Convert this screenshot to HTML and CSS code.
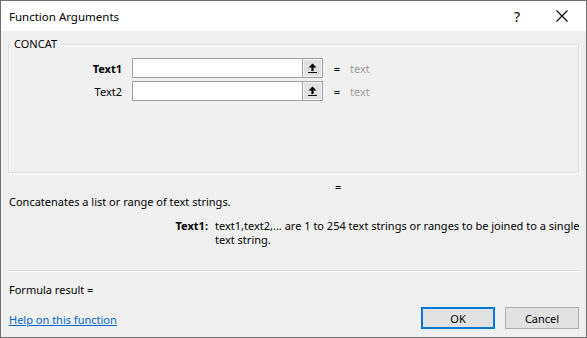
FILE: index.html
```html
<!DOCTYPE html>
<html lang="en">
<head>
  <meta charset="UTF-8" />
  <title>Function Arguments</title>
  <link rel="stylesheet" href="styles.css">
</head>
<body>
  <div class="dialog">
    <div class="titlebar">
      <span class="title">Function Arguments</span>
      <span class="help-btn">?</span>
      <span class="close-btn">
        <svg width="12" height="12" viewBox="0 0 12 12"><path d="M0.5 0.5 L11.5 11.5 M11.5 0.5 L0.5 11.5" stroke="#000" stroke-width="1.1" fill="none"/></svg>
      </span>
    </div>

    <div class="content">
      <fieldset class="group">
        <legend>CONCAT</legend>
        <div class="args">
          <label class="arg-name bold">Text1</label>
          <div class="ref-input">
            <input type="text" />
            <button class="ref-btn">
              <svg width="9" height="10" viewBox="0 0 9 10"><path d="M4.5 0.5 L8.5 4.5 L5.6 4.5 L5.6 8 L3.4 8 L3.4 4.5 L0.5 4.5 Z" fill="#000"/><rect x="0" y="9" width="9" height="1" fill="#000"/></svg>
            </button>
          </div>
          <span class="eq">=</span>
          <span class="val">text</span>

          <label class="arg-name">Text2</label>
          <div class="ref-input">
            <input type="text" />
            <button class="ref-btn">
              <svg width="9" height="10" viewBox="0 0 9 10"><path d="M4.5 0.5 L8.5 4.5 L5.6 4.5 L5.6 8 L3.4 8 L3.4 4.5 L0.5 4.5 Z" fill="#000"/><rect x="0" y="9" width="9" height="1" fill="#000"/></svg>
            </button>
          </div>
          <span class="eq">=</span>
          <span class="val">text</span>
        </div>
      </fieldset>

      <div class="result-eq">=</div>
      <div class="desc">Concatenates a list or range of text strings.</div>
      <div class="arg-help">
        <span class="bold help-name">Text1:</span>
        <span class="help-text">text1,text2,... are 1 to 254 text strings or ranges to be joined to a single text string.</span>
      </div>

      <div class="separator"></div>
      <div class="formula">Formula result =</div>

      <div class="footer">
        <a href="#" class="help-link">Help on this function</a>
        <div class="actions">
          <button class="btn primary">OK</button>
          <button class="btn">Cancel</button>
        </div>
      </div>
    </div>
  </div>
</body>
</html>
```

FILE: styles.css
```css
* {
  box-sizing: border-box;
}

body {
  margin: 0;
  padding: 0;
  font-family: 'Noto Sans', 'Segoe UI', sans-serif;
  font-size: 11px;
  color: #000;
}

.dialog {
  width: 587px;
  height: 338px;
  border: 1px solid #707070;
  background: #f0f0f0;
  display: flex;
  flex-direction: column;
}

.bold {
  font-weight: bold;
}

.titlebar {
  height: 30px;
  background: #fff;
  display: flex;
  align-items: center;
  padding-left: 8px;
}

.title {
  flex: 1;
  font-size: 11.5px;
}

.help-btn {
  width: 46px;
  text-align: center;
  font-size: 14px;
  padding-left: 2px;
}

.close-btn {
  width: 46px;
  display: flex;
  justify-content: center;
  margin-right: 1px;
}

.content {
  flex: 1;
  padding: 0 7px 0 7px;
  display: flex;
  flex-direction: column;
}

.group {
  margin: 5px 0 0 0;
  padding: 0;
  height: 137px;
  border: 1px solid #dcdcdc;
  box-shadow: inset 1px 1px 0 #fff, 1px 1px 0 #fff;
}

.group legend {
  margin-left: 1px;
  padding: 0 4px;
  line-height: 16px;
}

.args {
  display: grid;
  grid-template-columns: 123px 191px 18px auto;
  row-gap: 3px;
  align-items: center;
  margin-top: 6px;
}

.arg-name {
  text-align: right;
  padding-right: 10px;
}

.ref-input {
  display: flex;
  height: 20px;
}

.ref-input input {
  width: 170px;
  height: 20px;
  margin: 0;
  border: 1px solid #a0a0a0;
  border-right: none;
  background: #fff;
  font-family: inherit;
  font-size: 11px;
  padding: 0 3px;
}

.ref-btn {
  width: 21px;
  height: 20px;
  margin: 0;
  padding: 0;
  border: 1px solid #a0a0a0;
  background: #e1e1e1;
  box-shadow: inset 0 0 0 1px #f4f4f4;
  display: flex;
  align-items: center;
  justify-content: center;
}

.eq {
  text-align: right;
  padding-right: 1px;
}

.val {
  color: #a0a0a0;
  padding-left: 9px;
}

.result-eq {
  margin-top: 6px;
  padding-left: 327px;
  line-height: 16px;
}

.desc {
  line-height: 16px;
  margin-top: -1px;
  padding-left: 1px;
}

.arg-help {
  display: flex;
  margin-top: 9px;
  margin-right: -4px;
  line-height: 14px;
}

.help-name {
  width: 207px;
  text-align: right;
  padding-right: 7px;
  flex-shrink: 0;
}

.help-text {
  flex: 1;
}

.separator {
  margin-top: auto;
  height: 1px;
  background: #dcdcdc;
  box-shadow: 0 1px 0 #fff;
  margin-right: -1px;
}

.formula {
  margin-top: 11px;
  line-height: 16px;
  padding-left: 1px;
}

.footer {
  display: flex;
  align-items: center;
  justify-content: space-between;
  margin-top: 9px;
  margin-bottom: 8px;
}

.help-link {
  color: #0066cc;
  text-decoration: underline;
  padding-left: 1px;
  padding-top: 3px;
}

.actions {
  display: flex;
  gap: 10px;
}

.btn {
  width: 74px;
  height: 22px;
  border: 1px solid #adadad;
  background: #e1e1e1;
  font-family: inherit;
  font-size: 11px;
  padding: 0;
  color: #000;
}

.btn.primary {
  border: 2px solid #0078d7;
}
```
